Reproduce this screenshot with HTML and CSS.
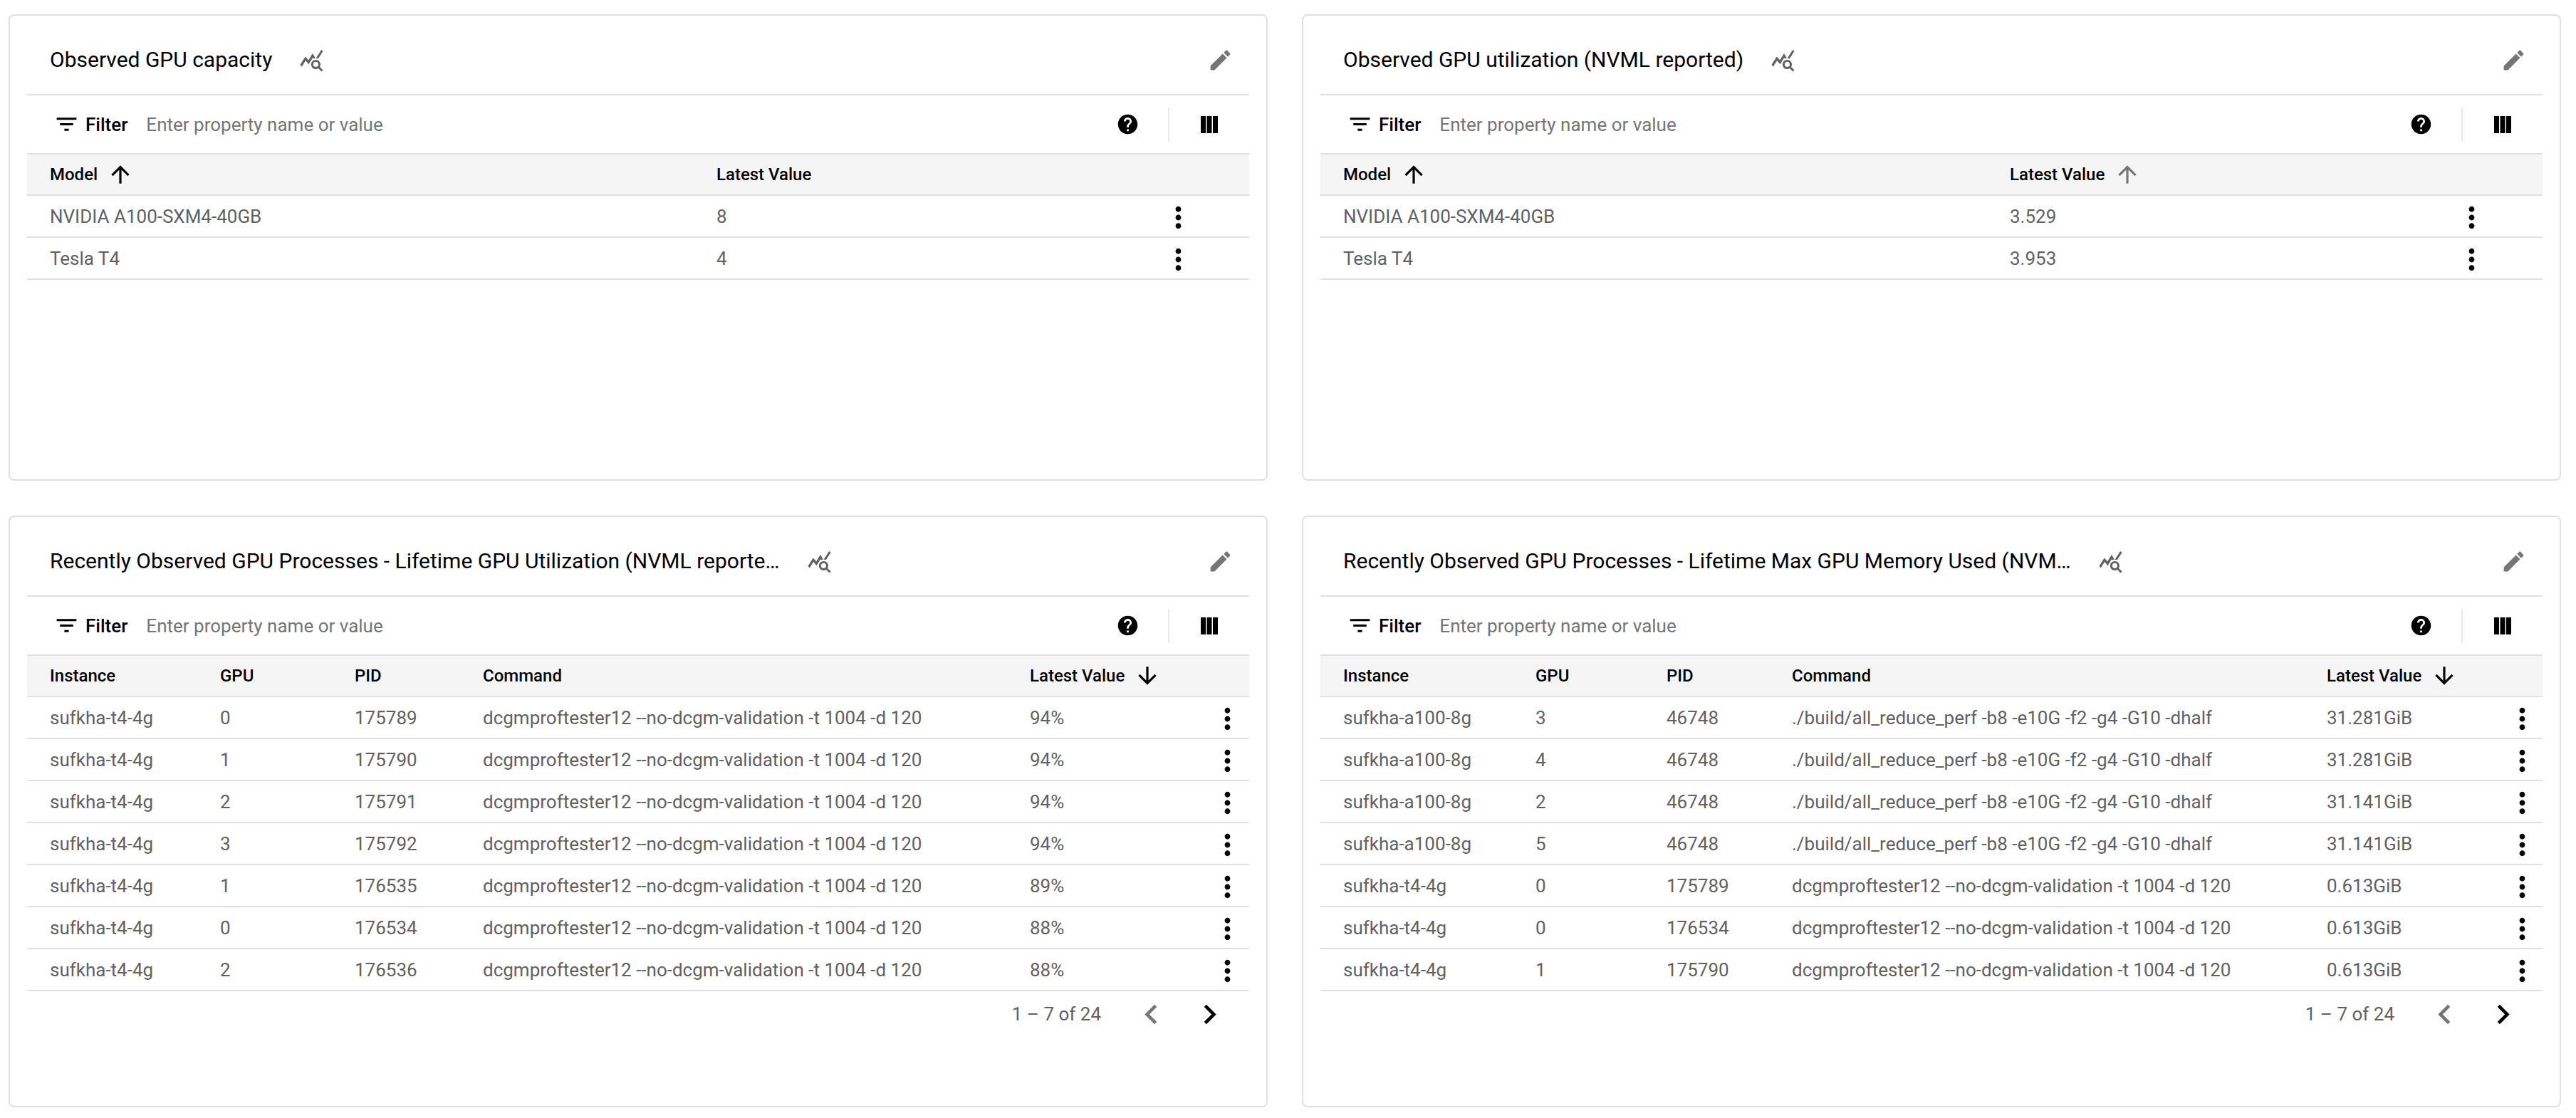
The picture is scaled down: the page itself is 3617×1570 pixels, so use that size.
FILE: index.html
```html
<!DOCTYPE html>
<html lang="en">
<head>
<meta charset="utf-8">
<title>GPU dashboard</title>
<link rel="stylesheet" href="styles.css">
</head>
<body>
<svg class="defs" width="0" height="0" aria-hidden="true">
  <defs>
    <symbol id="i-query" viewBox="0 0 24 24"><path d="M19.88,18.47c0.44-0.7,0.7-1.51,0.7-2.39c0-2.49-2.01-4.5-4.5-4.5s-4.5,2.01-4.5,4.5s2.01,4.5,4.49,4.5c0.88,0,1.7-0.26,2.39-0.7L21.58,23L23,21.58L19.88,18.47z M16.08,18.58c-1.38,0-2.5-1.12-2.5-2.5c0-1.38,1.12-2.5,2.5-2.5s2.5,1.12,2.5,2.5C18.58,17.46,17.46,18.58,16.08,18.58z M15.72,10.08c-0.74,0.02-1.45,0.18-2.1,0.45l-0.55-0.83l-3.8,6.18l-3.01-3.52l-3.63,5.81L1,16.5l5-8l3,3.5l4-6.5L15.72,10.08z M18.31,10.58c-0.64-0.28-1.33-0.45-2.05-0.49c0,0,5.12-8.09,5.12-8.09L23,3.18L18.31,10.58z"/></symbol>
    <symbol id="i-edit" viewBox="0 0 24 24"><path d="M3 17.25V21h3.75L17.81 9.94l-3.75-3.75L3 17.25zM20.71 7.04c.39-.39.39-1.02 0-1.41l-2.34-2.34c-.39-.39-1.02-.39-1.41 0l-1.83 1.83 3.75 3.75 1.83-1.83z"/></symbol>
    <symbol id="i-filter" viewBox="0 0 24 24"><path d="M10 18h4v-2h-4v2zM3 6v2h18V6H3zm3 7h12v-2H6v2z"/></symbol>
    <symbol id="i-help" viewBox="0 0 24 24"><path d="M12 2C6.48 2 2 6.48 2 12s4.48 10 10 10 10-4.48 10-10S17.52 2 12 2zm1 17h-2v-2h2v2zm2.07-7.75l-.9.92C13.45 12.9 13 13.5 13 15h-2v-.5c0-1.1.45-2.1 1.17-2.83l1.24-1.26c.37-.36.59-.86.59-1.41 0-1.1-.9-2-2-2s-2 .9-2 2H8c0-2.21 1.79-4 4-4s4 1.79 4 4c0 .88-.36 1.68-.93 2.25z"/></symbol>
    <symbol id="i-columns" viewBox="0 0 24 24"><path d="M0 0h7v24H0zM8.5 0h7v24h-7zM17 0h7v24h-7z"/></symbol>
    <symbol id="i-up" viewBox="0 0 24 24"><path d="M4 12l1.41 1.41L11 7.83V20h2V7.83l5.58 5.59L20 12l-8-8-8 8z"/></symbol>
    <symbol id="i-down" viewBox="0 0 24 24"><path d="M20 12l-1.41-1.41L13 16.17V4h-2v12.17l-5.58-5.59L4 12l8 8 8-8z"/></symbol>
    <symbol id="i-more" viewBox="0 0 24 24"><path d="M12 8c1.1 0 2-.9 2-2s-.9-2-2-2-2 .9-2 2 .9 2 2 2zm0 2c-1.1 0-2 .9-2 2s.9 2 2 2 2-.9 2-2-.9-2-2-2zm0 6c-1.1 0-2 .9-2 2s.9 2 2 2 2-.9 2-2-.9-2-2-2z"/></symbol>
    <symbol id="i-prev" viewBox="0 0 24 24"><path d="M15.41 7.41L14 6l-6 6 6 6 1.41-1.41L10.83 12z"/></symbol>
    <symbol id="i-next" viewBox="0 0 24 24"><path d="M10 6L8.59 7.41 13.17 12l-4.58 4.59L10 18l6-6z"/></symbol>
  </defs>
</svg>
<main class="dashboard">

  <section class="card card-short">
    <header class="card-head">
      <h2 class="title">Observed GPU capacity</h2>
      <svg class="ic-query"><use href="#i-query"/></svg>
      <svg class="ic-edit"><use href="#i-edit"/></svg>
    </header>
    <div class="toolbar">
      <svg class="ic-filter"><use href="#i-filter"/></svg>
      <span class="filter-label">Filter</span>
      <span class="placeholder">Enter property name or value</span>
      <svg class="ic-help"><use href="#i-help"/></svg>
      <span class="tool-sep"></span>
      <svg class="ic-columns"><use href="#i-columns"/></svg>
    </div>
    <div class="row head cols-model">
      <div class="cell">Model<svg class="ic-sort"><use href="#i-up"/></svg></div>
      <div class="cell">Latest Value</div>
      <div></div>
    </div>
    <div class="row cols-model"><div class="cell">NVIDIA A100-SXM4-40GB</div><div class="cell">8</div><svg class="ic-more"><use href="#i-more"/></svg></div>
    <div class="row cols-model"><div class="cell">Tesla T4</div><div class="cell">4</div><svg class="ic-more"><use href="#i-more"/></svg></div>
  </section>

  <section class="card card-short">
    <header class="card-head">
      <h2 class="title">Observed GPU utilization (NVML reported)</h2>
      <svg class="ic-query"><use href="#i-query"/></svg>
      <svg class="ic-edit"><use href="#i-edit"/></svg>
    </header>
    <div class="toolbar">
      <svg class="ic-filter"><use href="#i-filter"/></svg>
      <span class="filter-label">Filter</span>
      <span class="placeholder">Enter property name or value</span>
      <svg class="ic-help"><use href="#i-help"/></svg>
      <span class="tool-sep"></span>
      <svg class="ic-columns"><use href="#i-columns"/></svg>
    </div>
    <div class="row head cols-model">
      <div class="cell">Model<svg class="ic-sort"><use href="#i-up"/></svg></div>
      <div class="cell">Latest Value<svg class="ic-sort muted"><use href="#i-up"/></svg></div>
      <div></div>
    </div>
    <div class="row cols-model"><div class="cell">NVIDIA A100-SXM4-40GB</div><div class="cell">3.529</div><svg class="ic-more"><use href="#i-more"/></svg></div>
    <div class="row cols-model"><div class="cell">Tesla T4</div><div class="cell">3.953</div><svg class="ic-more"><use href="#i-more"/></svg></div>
  </section>

  <section class="card card-tall">
    <header class="card-head">
      <h2 class="title">Recently Observed GPU Processes - Lifetime GPU Utilization (NVML reporte…</h2>
      <svg class="ic-query"><use href="#i-query"/></svg>
      <svg class="ic-edit"><use href="#i-edit"/></svg>
    </header>
    <div class="toolbar">
      <svg class="ic-filter"><use href="#i-filter"/></svg>
      <span class="filter-label">Filter</span>
      <span class="placeholder">Enter property name or value</span>
      <svg class="ic-help"><use href="#i-help"/></svg>
      <span class="tool-sep"></span>
      <svg class="ic-columns"><use href="#i-columns"/></svg>
    </div>
    <div class="row head cols-util">
      <div class="cell">Instance</div><div class="cell">GPU</div><div class="cell">PID</div><div class="cell">Command</div>
      <div class="cell">Latest Value<svg class="ic-sort"><use href="#i-down"/></svg></div><div></div>
    </div>
    <div class="row cols-util"><div class="cell">sufkha-t4-4g</div><div class="cell">0</div><div class="cell">175789</div><div class="cell">dcgmproftester12 --no-dcgm-validation -t 1004 -d 120</div><div class="cell">94%</div><svg class="ic-more"><use href="#i-more"/></svg></div>
    <div class="row cols-util"><div class="cell">sufkha-t4-4g</div><div class="cell">1</div><div class="cell">175790</div><div class="cell">dcgmproftester12 --no-dcgm-validation -t 1004 -d 120</div><div class="cell">94%</div><svg class="ic-more"><use href="#i-more"/></svg></div>
    <div class="row cols-util"><div class="cell">sufkha-t4-4g</div><div class="cell">2</div><div class="cell">175791</div><div class="cell">dcgmproftester12 --no-dcgm-validation -t 1004 -d 120</div><div class="cell">94%</div><svg class="ic-more"><use href="#i-more"/></svg></div>
    <div class="row cols-util"><div class="cell">sufkha-t4-4g</div><div class="cell">3</div><div class="cell">175792</div><div class="cell">dcgmproftester12 --no-dcgm-validation -t 1004 -d 120</div><div class="cell">94%</div><svg class="ic-more"><use href="#i-more"/></svg></div>
    <div class="row cols-util"><div class="cell">sufkha-t4-4g</div><div class="cell">1</div><div class="cell">176535</div><div class="cell">dcgmproftester12 --no-dcgm-validation -t 1004 -d 120</div><div class="cell">89%</div><svg class="ic-more"><use href="#i-more"/></svg></div>
    <div class="row cols-util"><div class="cell">sufkha-t4-4g</div><div class="cell">0</div><div class="cell">176534</div><div class="cell">dcgmproftester12 --no-dcgm-validation -t 1004 -d 120</div><div class="cell">88%</div><svg class="ic-more"><use href="#i-more"/></svg></div>
    <div class="row cols-util"><div class="cell">sufkha-t4-4g</div><div class="cell">2</div><div class="cell">176536</div><div class="cell">dcgmproftester12 --no-dcgm-validation -t 1004 -d 120</div><div class="cell">88%</div><svg class="ic-more"><use href="#i-more"/></svg></div>
    <div class="pager">
      <span class="pager-range">1 – 7 of 24</span>
      <svg class="ic-page muted"><use href="#i-prev"/></svg>
      <svg class="ic-page"><use href="#i-next"/></svg>
    </div>
  </section>

  <section class="card card-tall">
    <header class="card-head">
      <h2 class="title">Recently Observed GPU Processes - Lifetime Max GPU Memory Used (NVM…</h2>
      <svg class="ic-query"><use href="#i-query"/></svg>
      <svg class="ic-edit"><use href="#i-edit"/></svg>
    </header>
    <div class="toolbar">
      <svg class="ic-filter"><use href="#i-filter"/></svg>
      <span class="filter-label">Filter</span>
      <span class="placeholder">Enter property name or value</span>
      <svg class="ic-help"><use href="#i-help"/></svg>
      <span class="tool-sep"></span>
      <svg class="ic-columns"><use href="#i-columns"/></svg>
    </div>
    <div class="row head cols-mem">
      <div class="cell">Instance</div><div class="cell">GPU</div><div class="cell">PID</div><div class="cell">Command</div>
      <div class="cell">Latest Value<svg class="ic-sort"><use href="#i-down"/></svg></div><div></div>
    </div>
    <div class="row cols-mem"><div class="cell">sufkha-a100-8g</div><div class="cell">3</div><div class="cell">46748</div><div class="cell">./build/all_reduce_perf -b8 -e10G -f2 -g4 -G10 -dhalf</div><div class="cell">31.281GiB</div><svg class="ic-more"><use href="#i-more"/></svg></div>
    <div class="row cols-mem"><div class="cell">sufkha-a100-8g</div><div class="cell">4</div><div class="cell">46748</div><div class="cell">./build/all_reduce_perf -b8 -e10G -f2 -g4 -G10 -dhalf</div><div class="cell">31.281GiB</div><svg class="ic-more"><use href="#i-more"/></svg></div>
    <div class="row cols-mem"><div class="cell">sufkha-a100-8g</div><div class="cell">2</div><div class="cell">46748</div><div class="cell">./build/all_reduce_perf -b8 -e10G -f2 -g4 -G10 -dhalf</div><div class="cell">31.141GiB</div><svg class="ic-more"><use href="#i-more"/></svg></div>
    <div class="row cols-mem"><div class="cell">sufkha-a100-8g</div><div class="cell">5</div><div class="cell">46748</div><div class="cell">./build/all_reduce_perf -b8 -e10G -f2 -g4 -G10 -dhalf</div><div class="cell">31.141GiB</div><svg class="ic-more"><use href="#i-more"/></svg></div>
    <div class="row cols-mem"><div class="cell">sufkha-t4-4g</div><div class="cell">0</div><div class="cell">175789</div><div class="cell">dcgmproftester12 --no-dcgm-validation -t 1004 -d 120</div><div class="cell">0.613GiB</div><svg class="ic-more"><use href="#i-more"/></svg></div>
    <div class="row cols-mem"><div class="cell">sufkha-t4-4g</div><div class="cell">0</div><div class="cell">176534</div><div class="cell">dcgmproftester12 --no-dcgm-validation -t 1004 -d 120</div><div class="cell">0.613GiB</div><svg class="ic-more"><use href="#i-more"/></svg></div>
    <div class="row cols-mem"><div class="cell">sufkha-t4-4g</div><div class="cell">1</div><div class="cell">175790</div><div class="cell">dcgmproftester12 --no-dcgm-validation -t 1004 -d 120</div><div class="cell">0.613GiB</div><svg class="ic-more"><use href="#i-more"/></svg></div>
    <div class="pager">
      <span class="pager-range">1 – 7 of 24</span>
      <svg class="ic-page muted"><use href="#i-prev"/></svg>
      <svg class="ic-page"><use href="#i-next"/></svg>
    </div>
  </section>

</main>
</body>
</html>
```
FILE: styles.css
```css
* { box-sizing: border-box; }

html, body { margin: 0; background: #fff; }

body {
  font-family: Roboto, "Liberation Sans", sans-serif;
  color: #616161;
  overflow: hidden;
}

.defs { position: absolute; }

.dashboard {
  display: grid;
  grid-template-columns: 1768px 1768px;
  grid-template-rows: 655px 831px;
  gap: 49px 48px;
  padding: 20px 0 0 12px;
}

.card {
  border: 2px solid #e0e0e0;
  border-radius: 8px;
  padding: 0 24px;
  background: #fff;
}

.card-head {
  display: flex;
  align-items: center;
  height: 112px;
  padding-top: 14px;
  padding-left: 32px;
  border-bottom: 2px solid #e0e0e0;
}

.title {
  margin: 0;
  font-size: 30px;
  font-weight: 400;
  color: #000;
  white-space: nowrap;
  line-height: 40px;
}

.ic-query {
  width: 35px;
  height: 35px;
  margin-left: 38px;
  fill: #616161;
  flex: none;
}

.ic-edit {
  width: 37px;
  height: 37px;
  margin-left: auto;
  margin-right: 22px;
  fill: #757575;
  flex: none;
}

.toolbar {
  display: flex;
  align-items: center;
  height: 81px;
  padding-left: 37px;
  padding-right: 44px;
}

.ic-filter {
  width: 37px;
  height: 37px;
  fill: #000;
  flex: none;
}

.filter-label {
  margin-left: 8px;
  font-size: 26px;
  font-weight: 500;
  color: #000;
}

.placeholder {
  margin-left: 26px;
  font-size: 26px;
  color: #757575;
}

.ic-help {
  width: 33px;
  height: 33px;
  margin-left: auto;
  fill: #000;
  flex: none;
}

.tool-sep {
  width: 2px;
  height: 48px;
  margin-left: 40px;
  margin-right: 44px;
  background: #e8e8e8;
  flex: none;
}

.ic-columns {
  width: 24px;
  height: 24px;
  fill: #000;
  flex: none;
}

.row {
  display: grid;
  align-items: center;
  height: 59px;
  border-bottom: 2px solid #e0e0e0;
  font-size: 26px;
}

.head {
  height: 60px;
  border-top: 2px solid #e0e0e0;
  background: #f5f5f5;
  color: #000;
  font-weight: 500;
  font-size: 24px;
}

.cols-model { grid-template-columns: 936px 1fr 200px; }
.cols-util { grid-template-columns: 239px 189px 180px 768px 1fr 62px; }
.cols-mem { grid-template-columns: 270px 184px 176px 751px 1fr 58px; }

.cell {
  display: flex;
  align-items: center;
  padding-left: 32px;
  white-space: nowrap;
}

.ic-sort {
  width: 38px;
  height: 38px;
  margin-left: 13px;
  fill: #000;
  flex: none;
}

.ic-sort.muted { fill: #757575; }

.ic-more {
  width: 47px;
  height: 47px;
  margin-top: 3px;
  justify-self: center;
  fill: #000;
}

.pager {
  display: flex;
  align-items: center;
  justify-content: flex-end;
  height: 64px;
  padding-right: 28px;
}

.pager-range {
  margin-right: 43px;
  font-size: 26px;
}

.ic-page {
  width: 55px;
  height: 55px;
  fill: #000;
  flex: none;
}

.ic-page + .ic-page { margin-left: 27px; }
.ic-page.muted { fill: #757575; }
```
